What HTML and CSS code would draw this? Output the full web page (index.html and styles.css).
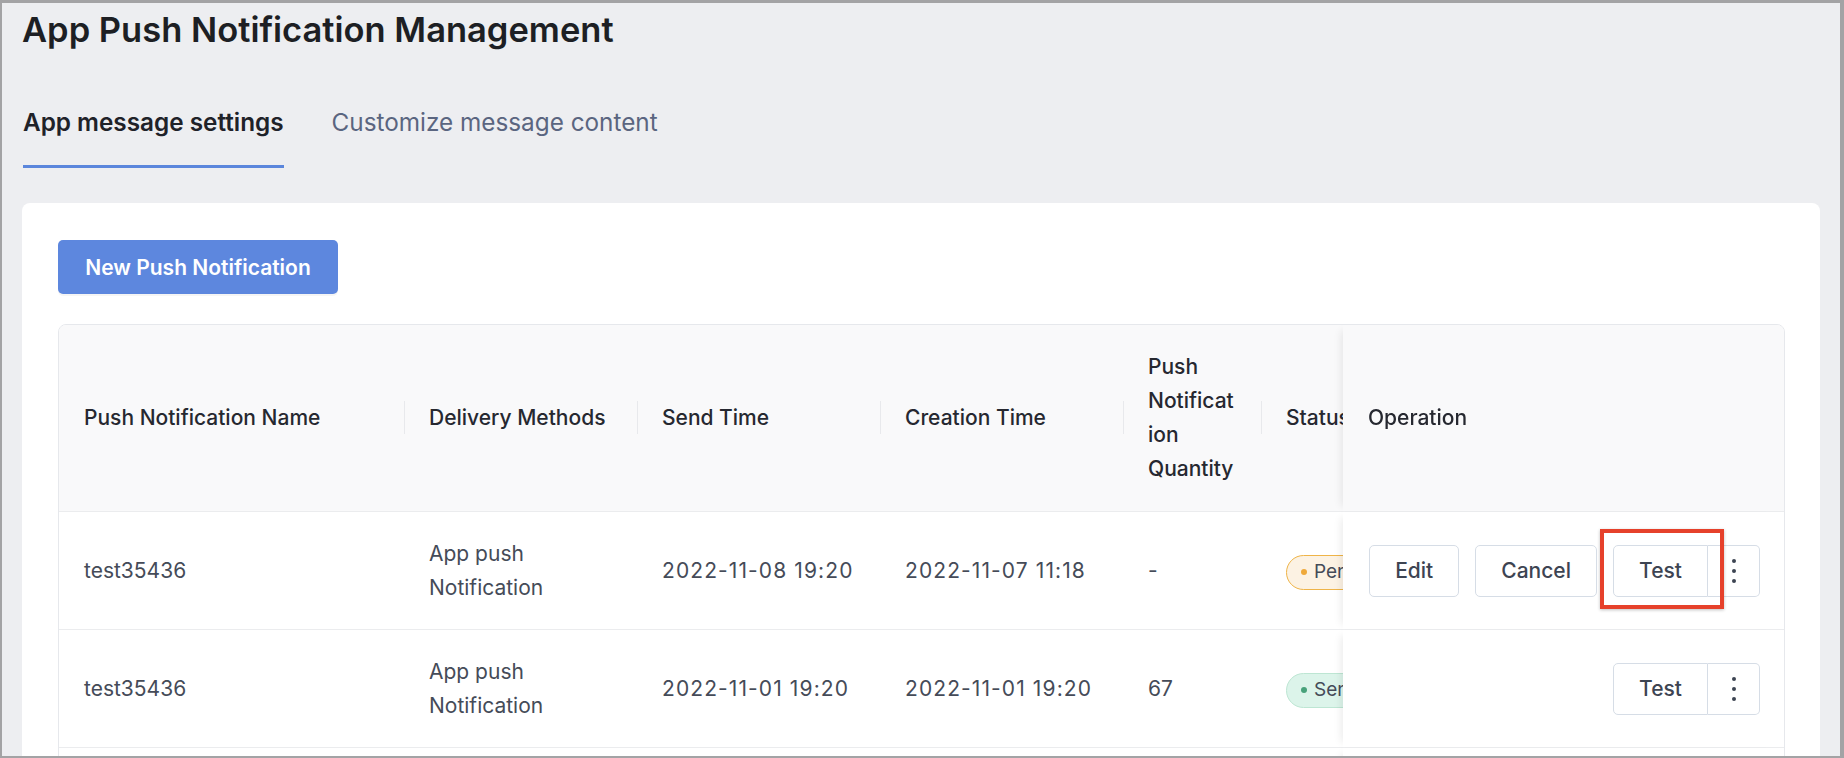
FILE: index.html
```html
<!doctype html>
<html lang="en">
<head>
    <meta charset="UTF-8">
    <title>App Push Notification Management</title>
    <link rel="stylesheet" href="styles.css">
</head>
<body>
<div id="frame">
    <h1 class="page-title">App Push Notification Management</h1>

    <div class="tabs">
        <span class="tab active">App message settings</span>
        <span class="tab">Customize message content</span>
    </div>

    <div class="card">
        <button class="btn-primary">New Push Notification</button>

        <div class="table-wrap">
            <table>
                <colgroup>
                    <col style="width: 345px">
                    <col style="width: 233px">
                    <col style="width: 243px">
                    <col style="width: 243px">
                    <col style="width: 138px">
                    <col style="width: 201px">
                    <col style="width: 441px">
                </colgroup>
                <thead>
                <tr>
                    <th>Push Notification Name</th>
                    <th>Delivery Methods</th>
                    <th>Send Time</th>
                    <th>Creation Time</th>
                    <th class="wrap">Push Notification Quantity</th>
                    <th>Status</th>
                    <th class="op">Operation</th>
                </tr>
                </thead>
                <tbody>
                <tr>
                    <td>test35436</td>
                    <td>App push<br>Notification</td>
                    <td class="time">2022-11-08 19:20</td>
                    <td class="time">2022-11-07 11:18</td>
                    <td>-</td>
                    <td><span class="badge pending"><i></i>Pending</span></td>
                    <td class="op">
                        <div class="actions">
                            <button class="btn">Edit</button>
                            <button class="btn">Cancel</button>
                            <div class="split highlight">
                                <button class="btn">Test</button>
                                <button class="btn more">
                                    <svg width="4" height="24" viewBox="0 0 4 24"><circle cx="2" cy="2" r="2"/><circle cx="2" cy="12" r="2"/><circle cx="2" cy="22" r="2"/></svg>
                                </button>
                            </div>
                        </div>
                    </td>
                </tr>
                <tr>
                    <td>test35436</td>
                    <td>App push<br>Notification</td>
                    <td class="time">2022-11-01 19:20</td>
                    <td class="time">2022-11-01 19:20</td>
                    <td>67</td>
                    <td><span class="badge sent"><i></i>Sent</span></td>
                    <td class="op">
                        <div class="actions">
                            <div class="split">
                                <button class="btn">Test</button>
                                <button class="btn more">
                                    <svg width="4" height="24" viewBox="0 0 4 24"><circle cx="2" cy="2" r="2"/><circle cx="2" cy="12" r="2"/><circle cx="2" cy="22" r="2"/></svg>
                                </button>
                            </div>
                        </div>
                    </td>
                </tr>
                <tr>
                    <td></td>
                    <td></td>
                    <td></td>
                    <td></td>
                    <td></td>
                    <td></td>
                    <td class="op"></td>
                </tr>
                </tbody>
            </table>
        </div>
    </div>
</div>
</body>
</html>
```

FILE: styles.css
```css
* {
    box-sizing: border-box;
}

body {
    margin: 0;
    font-family: "Inter", "Noto Sans", sans-serif;
}

#frame {
    width: 1844px;
    height: 758px;
    overflow: hidden;
    background: #edeef1;
    border: 2px solid #a3a3a5;
    border-top-width: 3px;
    border-right-width: 4px;
    padding: 0 20px;
}

.page-title {
    margin: 7px 0 0 0;
    font-size: 34.5px;
    line-height: 40px;
    font-weight: 600;
    color: #1d1f24;
}

.tabs {
    display: flex;
    gap: 48px;
    margin-top: 57px;
    padding-left: 1px;
}

.tab {
    font-size: 24.3px;
    line-height: 30px;
    color: #5a6580;
    padding-bottom: 28px;
    border-bottom: 3px solid transparent;
}

.tab.active {
    font-weight: 600;
    color: #1f2229;
    border-bottom-color: #5b86dc;
}

.card {
    margin-top: 35px;
    background: #fff;
    border-radius: 8px;
    padding: 37px 35px 0 36px;
    height: 600px;
}

.btn-primary {
    display: block;
    width: 280px;
    height: 54px;
    border: none;
    border-radius: 5px;
    background: #5d87de;
    color: #fff;
    font-family: inherit;
    font-size: 21px;
    font-weight: 600;
    box-shadow: 0 2px 0 rgba(0, 0, 0, 0.04);
}

.table-wrap {
    margin-top: 30px;
    border: 1px solid #e6e8ec;
    border-radius: 8px;
    overflow: hidden;
}

table {
    border-collapse: separate;
    border-spacing: 0;
    table-layout: fixed;
    width: 1844px;
}

th, td {
    text-align: left;
    font-size: 21px;
    line-height: 34px;
    border-bottom: 1px solid #ebecee;
    padding: 0 24px 0 25px;
    vertical-align: middle;
}

th {
    position: relative;
    height: 187px;
    background: #f9f9fa;
    font-weight: 500;
    color: #262830;
}

th + th::before {
    content: "";
    position: absolute;
    left: 0;
    top: 76px;
    height: 33px;
    width: 1px;
    background: #e8e9ec;
}

th.wrap {
    overflow-wrap: anywhere;
}

td {
    height: 118px;
    color: #454b58;
    background: #fff;
}

td.time {
    white-space: nowrap;
    letter-spacing: 1.1px;
}

.op {
    position: sticky;
    right: 0;
    z-index: 2;
    box-shadow: -8px 0 8px -6px rgba(0, 0, 0, 0.08);
}

th.op {
    background: #f9f9fa;
}

th.op::before {
    display: none;
}

.badge {
    display: inline-flex;
    align-items: center;
    gap: 7px;
    height: 35px;
    padding: 0 14px;
    border-radius: 18px;
    font-size: 19px;
    border: 1.5px solid;
}

.badge i {
    width: 6px;
    height: 6px;
    border-radius: 50%;
}

.badge.pending {
    background: #fcf2e3;
    border-color: #efb448;
}

.badge.pending i {
    background: #efa93a;
}

.badge.sent {
    background: #dcf4ea;
    border-color: #bde6d3;
}

.badge.sent i {
    background: #48a27b;
}

.actions {
    display: flex;
    justify-content: flex-end;
    gap: 16px;
}

.btn {
    height: 52px;
    padding: 0 25px;
    background: #fff;
    border: 1.5px solid #d6dde6;
    border-radius: 5px;
    font-family: inherit;
    font-size: 21px;
    font-weight: 500;
    color: #3d4452;
}

.split {
    position: relative;
    display: flex;
}

.split .btn:first-child {
    width: 95px;
    padding: 0;
    border-radius: 5px 0 0 5px;
}

.split .more {
    width: 52px;
    padding: 0;
    border-left: none;
    border-radius: 0 5px 5px 0;
    display: flex;
    align-items: center;
    justify-content: center;
    fill: #3d4452;
}

.highlight::after {
    content: "";
    box-sizing: border-box;
    position: absolute;
    left: -13px;
    top: -16px;
    width: 124px;
    height: 80px;
    border: 4px solid #e6412b;
    box-shadow: 0 1px 3px rgba(0, 0, 0, 0.25);
    pointer-events: none;
}
```
